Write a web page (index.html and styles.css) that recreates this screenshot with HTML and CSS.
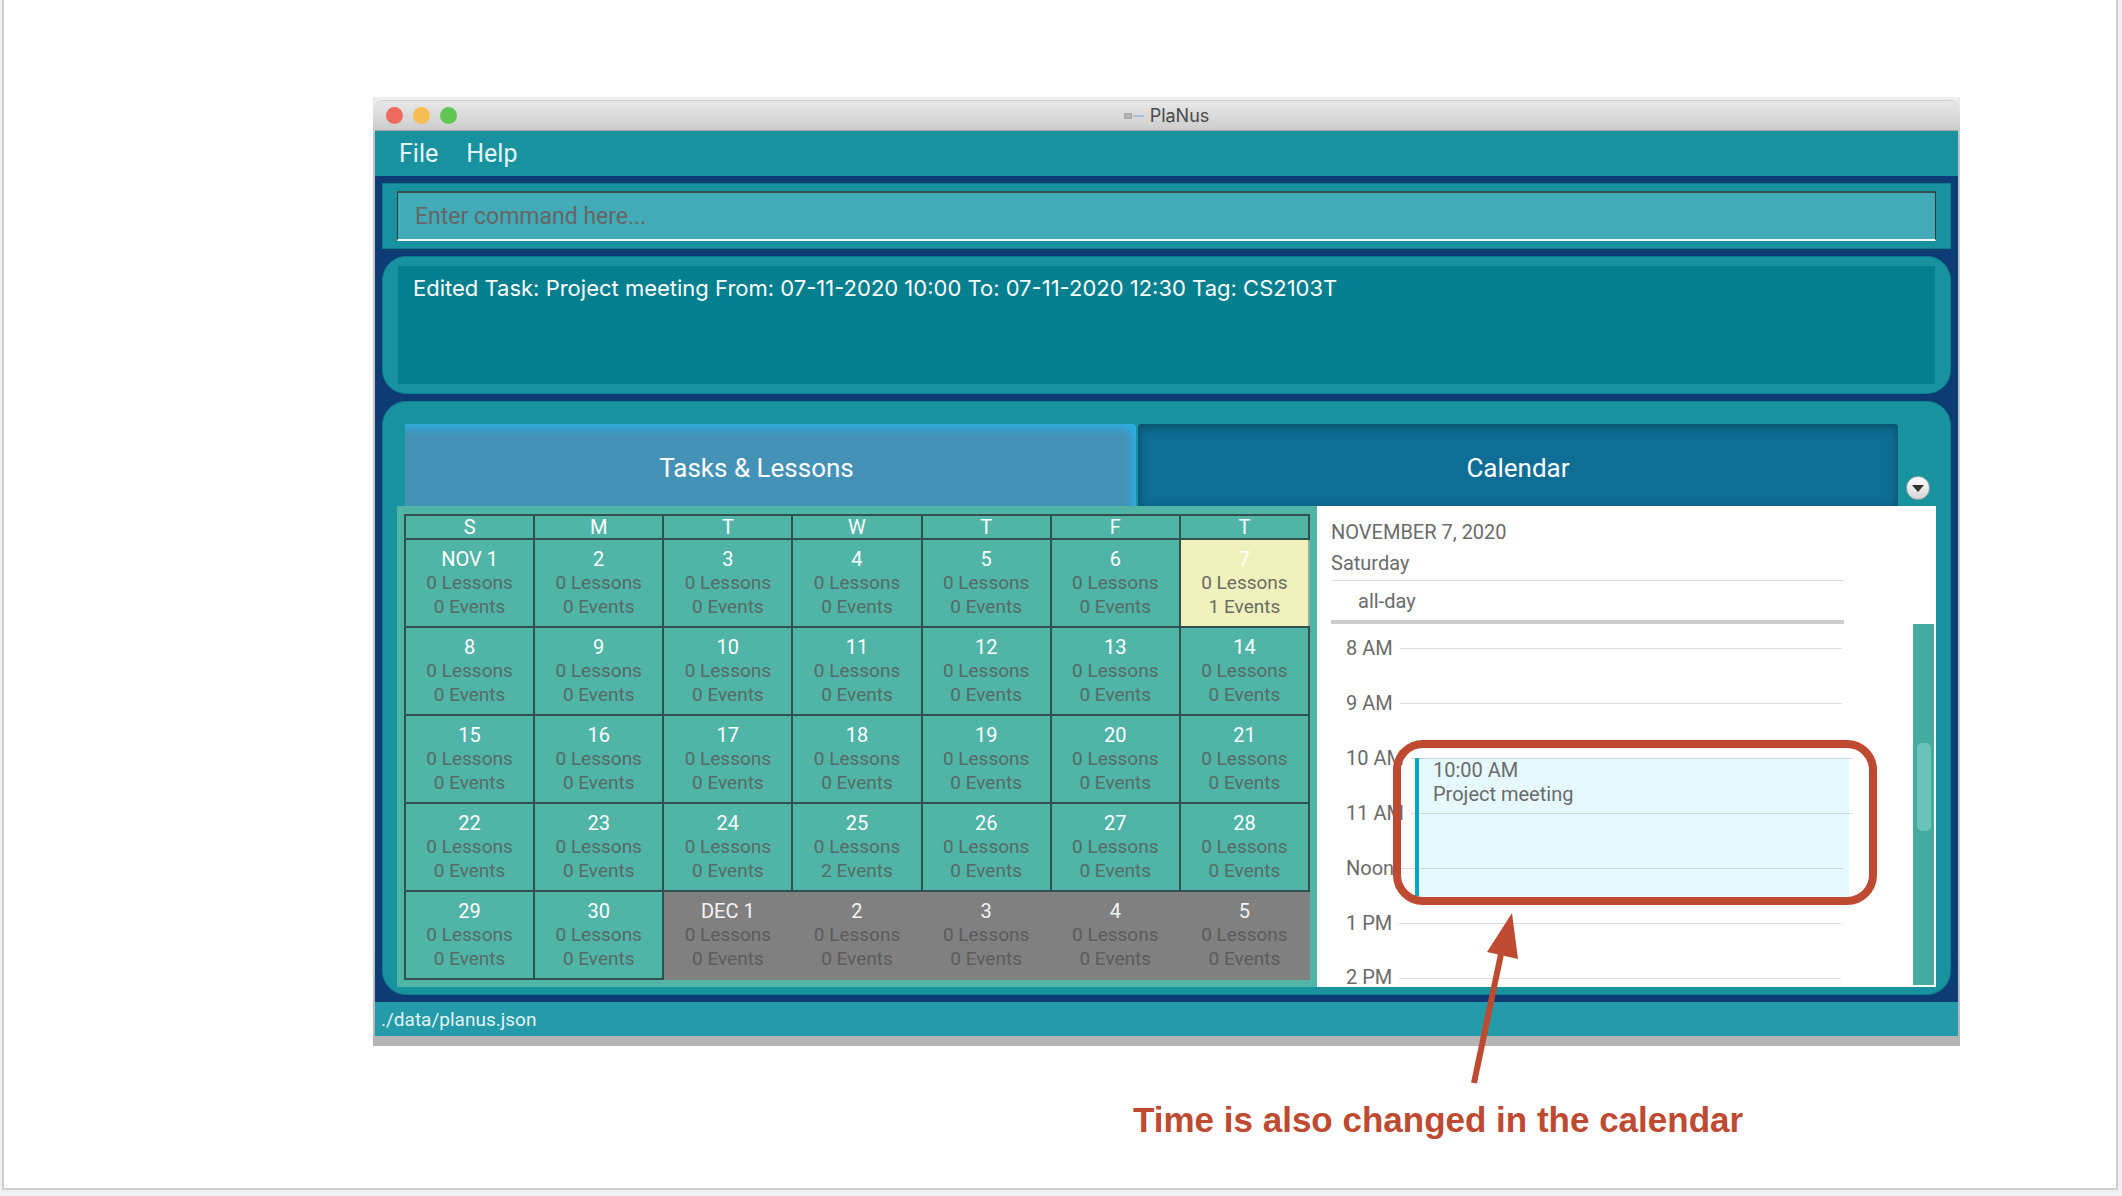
FILE: index.html
```html
<!DOCTYPE html>
<html lang="en">
<head>
<meta charset="utf-8">
<title>PlaNus</title>
<link rel="stylesheet" href="styles.css">
</head>
<body>
<main class="slide">
  <figure class="figure">
    <div class="window">
      <header class="titlebar">
        <span class="lights"><i class="light red"></i><i class="light amber"></i><i class="light green"></i></span>
        <span class="title">
          <svg class="app-icon" width="20" height="8" viewBox="0 0 20 8" aria-hidden="true"><rect x="0" y="1" width="8" height="6" fill="#aaa"/><rect x="2" y="2" width="4" height="3" fill="#bfb9ad"/><path d="M9 4h11" stroke="#a9bfd2" stroke-width="2"/></svg>
          PlaNus
        </span>
      </header>
      <nav class="menubar">
        <button class="menu" type="button">File</button>
        <button class="menu" type="button">Help</button>
      </nav>
      <div class="body">
        <div class="panel command">
          <input class="command-input" type="text" aria-label="Command" placeholder="Enter command here...">
        </div>
        <section class="panel rounded result">
          <p class="result-text">Edited Task: Project meeting From: 07-11-2020 10:00 To: 07-11-2020 12:30 Tag: CS2103T</p>
        </section>
        <section class="panel rounded planner">
          <div class="tabs" role="tablist">
            <button class="tab tasks" type="button" role="tab" aria-selected="false">Tasks &amp; Lessons</button>
            <button class="tab calendar" type="button" role="tab" aria-selected="true">Calendar</button>
            <button class="tab-menu" type="button" aria-label="More tabs"><svg width="12" height="7" viewBox="0 0 12 7" aria-hidden="true"><path d="M0 0h12L6 7z" fill="#333"/></svg></button>
          </div>
          <div class="content">
            <div class="month">
              <table class="grid">
                <thead>
                  <tr><th>S</th><th>M</th><th>T</th><th>W</th><th>T</th><th>F</th><th>T</th></tr>
                </thead>
                <tbody>
                  <tr>
                    <td><b>NOV 1</b>0 Lessons<br>0 Events</td>
                    <td><b>2</b>0 Lessons<br>0 Events</td>
                    <td><b>3</b>0 Lessons<br>0 Events</td>
                    <td><b>4</b>0 Lessons<br>0 Events</td>
                    <td><b>5</b>0 Lessons<br>0 Events</td>
                    <td><b>6</b>0 Lessons<br>0 Events</td>
                    <td class="selected"><b>7</b>0 Lessons<br>1 Events</td>
                  </tr>
                  <tr>
                    <td><b>8</b>0 Lessons<br>0 Events</td>
                    <td><b>9</b>0 Lessons<br>0 Events</td>
                    <td><b>10</b>0 Lessons<br>0 Events</td>
                    <td><b>11</b>0 Lessons<br>0 Events</td>
                    <td><b>12</b>0 Lessons<br>0 Events</td>
                    <td><b>13</b>0 Lessons<br>0 Events</td>
                    <td><b>14</b>0 Lessons<br>0 Events</td>
                  </tr>
                  <tr>
                    <td><b>15</b>0 Lessons<br>0 Events</td>
                    <td><b>16</b>0 Lessons<br>0 Events</td>
                    <td><b>17</b>0 Lessons<br>0 Events</td>
                    <td><b>18</b>0 Lessons<br>0 Events</td>
                    <td><b>19</b>0 Lessons<br>0 Events</td>
                    <td><b>20</b>0 Lessons<br>0 Events</td>
                    <td><b>21</b>0 Lessons<br>0 Events</td>
                  </tr>
                  <tr>
                    <td><b>22</b>0 Lessons<br>0 Events</td>
                    <td><b>23</b>0 Lessons<br>0 Events</td>
                    <td><b>24</b>0 Lessons<br>0 Events</td>
                    <td><b>25</b>0 Lessons<br>2 Events</td>
                    <td><b>26</b>0 Lessons<br>0 Events</td>
                    <td><b>27</b>0 Lessons<br>0 Events</td>
                    <td><b>28</b>0 Lessons<br>0 Events</td>
                  </tr>
                  <tr>
                    <td><b>29</b>0 Lessons<br>0 Events</td>
                    <td><b>30</b>0 Lessons<br>0 Events</td>
                    <td class="next"><b>DEC 1</b>0 Lessons<br>0 Events</td>
                    <td class="next"><b>2</b>0 Lessons<br>0 Events</td>
                    <td class="next"><b>3</b>0 Lessons<br>0 Events</td>
                    <td class="next"><b>4</b>0 Lessons<br>0 Events</td>
                    <td class="next"><b>5</b>0 Lessons<br>0 Events</td>
                  </tr>
                </tbody>
              </table>
            </div>
            <div class="day">
              <div class="day-head">
                <h2 class="date">NOVEMBER 7, 2020</h2>
                <p class="weekday">Saturday</p>
                <p class="all-day">all-day</p>
              </div>
              <div class="day-scroll">
                <ol class="hours">
                  <li class="hour">8 AM</li>
                  <li class="hour">9 AM</li>
                  <li class="hour">10 AM</li>
                  <li class="hour">11 AM</li>
                  <li class="hour">Noon</li>
                  <li class="hour">1 PM</li>
                  <li class="hour">2 PM</li>
                </ol>
                <div class="event">10:00 AM<br>Project meeting</div>
                <div class="scrollbar"><div class="thumb"></div></div>
              </div>
              <div class="highlight"></div>
              <svg class="arrow" width="60" height="180" viewBox="0 0 60 180" aria-hidden="true"><path d="M6 173L33 44" stroke="#be4a32" stroke-width="6"/><path d="M44 3L50 49L19 42z" fill="#be4a32"/></svg>
            </div>
          </div>
        </section>
      </div>
      <footer class="status">./data/planus.json</footer>
    </div>
    <figcaption class="caption">Time is also changed in the calendar</figcaption>
  </figure>
</main>
</body>
</html>
```
FILE: styles.css
```css
* {
  box-sizing: border-box;
}

body {
  margin: 0;
  padding: 0 4px 6px 2px;
  min-height: 100vh;
  display: flex;
  background: #eff0f2;
  font-family: Roboto, "Liberation Sans", sans-serif;
  font-size: 20px;
  line-height: 24px;
}

h2, p, ol, figure {
  margin: 0;
  padding: 0;
  font-size: inherit;
  font-weight: 400;
}

button, input {
  font: inherit;
  border: 0;
  border-radius: 0;
  margin: 0;
  padding: 0;
}

.slide {
  flex: 1;
  padding: 97px 156px 0 369px;
  background: #fff;
  border: 2px solid #cfcfcf;
  border-top: 0;
}

/* Window */
.window {
  padding: 3px 2px 10px;
  background: linear-gradient(#f0f0f0, #c4c4c4 40px, #c4c4c4 90%, #b4b4b4);
}

.titlebar {
  display: grid;
  grid-template-columns: 1fr auto 1fr;
  align-items: center;
  height: 31px;
  padding: 0 11px;
  border-top: 1px solid #d0d0d0;
  border-bottom: 1px solid #a6a6a6;
  border-radius: 8px 8px 0 0;
  background: linear-gradient(#e8e8e8, #cdcdcd);
  color: #4a4a4a;
  font-family: Inter, "Liberation Sans", sans-serif;
  font-size: 18px;
}

.lights {
  display: flex;
  gap: 10px;
}

.light {
  width: 17px;
  height: 17px;
  border-radius: 50%;
}

.red { background: #ee6a5f; }
.amber { background: #f6be50; }
.green { background: #62c655; }

.title {
  display: flex;
  align-items: center;
  gap: 6px;
}

.menubar {
  display: flex;
  gap: 28px;
  height: 45px;
  padding: 0 24px;
  background: #19929f;
}

.menu {
  background: none;
  color: #e3f3f5;
  font-size: 25px;
}

.body {
  display: flex;
  flex-direction: column;
  gap: 7px;
  padding: 7px;
  background: #0d3b73;
}

.panel {
  background: #19929f;
  border: 1px solid #0a7f8f;
}

.rounded {
  border-radius: 24px;
}

.command {
  padding: 7px 14px;
}

.command-input {
  display: block;
  width: 100%;
  height: 50px;
  padding: 0 17px;
  background: #42abb7;
  border: 1px solid #383838;
  border-top: 2px solid #3b4c50;
  border-bottom: 2px solid #eef8f9;
  color: #fff;
  font-size: 23px;
}

.command-input::placeholder {
  color: #666;
  opacity: 1;
}

.result {
  padding: 9px 15px;
}

.result-text {
  min-height: 118px;
  padding: 10px 15px;
  background: #02808f;
  color: #fff;
  font-family: Inter, "Liberation Sans", sans-serif;
  font-size: 22px;
}

.planner {
  padding: 22px 14px 7px;
}

/* Tabs */
.tabs {
  display: flex;
  gap: 2px;
  padding: 0 6px 0 8px;
}

.tab {
  height: 82px;
  padding-top: 5px;
  color: #fff;
  font-size: 26px;
}

.tasks {
  flex: 703;
  padding-right: 28px;
  border-radius: 0 4px 0 0;
  background: #4492b5;
  box-shadow: inset -8px 8px 10px -4px #2aafe6;
}

.calendar {
  flex: 760;
  border-radius: 4px 4px 0 0;
  background: #0f6e96;
  box-shadow: inset 0 3px 10px 1px #07506a;
}

.tab-menu {
  align-self: flex-end;
  display: grid;
  place-items: center;
  width: 24px;
  height: 24px;
  margin: 0 0 6px 6px;
  border: 1px solid #9aa;
  border-radius: 50%;
  background: linear-gradient(#fff, #d5d5d5);
}

/* Calendar */
.content {
  display: flex;
}

.month {
  flex: 906;
  padding: 8px 7px 7px;
  background: #50b4a7;
}

.grid {
  width: 100%;
  table-layout: fixed;
  border-collapse: collapse;
  text-align: center;
  color: #566b67;
  font-size: 19px;
}

.grid th,
.grid td {
  padding: 0;
  border: 2px solid #30524e;
}

.grid th {
  height: 24px;
  line-height: 22px;
  color: #fff;
  font-size: 20px;
  font-weight: 400;
}

.grid td {
  height: 88px;
  padding: 0;
}

.grid b {
  display: block;
  color: #fff;
  font-size: 20px;
  font-weight: 400;
}

.grid .selected {
  background: #eff2bd;
  border-right-color: #8fae95;
  color: #6b6c60;
}

.grid .next {
  background: #808080;
  border-color: #808080;
  color: #5c5c5c;
}

.grid .next b {
  color: #f4f4f4;
}

/* Day view */
.day {
  position: relative;
  flex: 619;
  display: flex;
  flex-direction: column;
  background: #fff;
  color: #6b6b6b;
}

.day-head {
  width: calc(100% - 106px);
  margin-left: 14px;
  padding-top: 14px;
  border-bottom: 4px solid #ccc;
}

.weekday {
  padding: 7px 0 5px;
  border-bottom: 1px solid #ddd;
}

.all-day {
  padding: 8px 27px 7px;
}

.day-scroll {
  position: relative;
  flex: 1 1 0;
  min-height: 0;
  display: flex;
  justify-content: space-between;
  padding: 0 2px 0 29px;
  overflow: hidden;
}

.hours {
  flex: 1;
  padding-top: 12px;
  list-style: none;
}

.hour {
  display: flex;
  gap: 7px;
  height: 55px;
}

.hour:last-child {
  height: 22px;
  line-height: 22px;
}

.hour::after {
  content: "";
  width: calc(100% - 125px);
  height: 12px;
  border-bottom: 1px solid #ddd;
}

.event {
  position: absolute;
  top: 134px;
  left: 98px;
  right: 87px;
  height: 138px;
  padding: 0 14px;
  background: rgba(0, 200, 255, 0.1);
  border-left: 4px solid #0aa3cb;
}

.scrollbar {
  width: 21px;
  margin-bottom: 2px;
  padding: 119px 3px 0 4px;
  background: #43ac9f;
}

.thumb {
  height: 88px;
  border-radius: 5px;
  background: #6bc4b8;
}

/* Callout drawn over the day view */
.highlight {
  position: absolute;
  top: 234px;
  left: 76px;
  right: 59px;
  height: 165px;
  border: 8px solid #be4a32;
  border-radius: 30px;
}

.arrow {
  position: absolute;
  top: 404px;
  left: 151px;
}

.status {
  height: 34px;
  padding: 6px 6px;
  background: #259aa8;
  color: #e3f3f5;
  font-size: 19px;
}

.caption {
  padding: 54px 0 0 760px;
  color: #be4a32;
  font: 700 35px/40px "Liberation Sans", sans-serif;
}
```
